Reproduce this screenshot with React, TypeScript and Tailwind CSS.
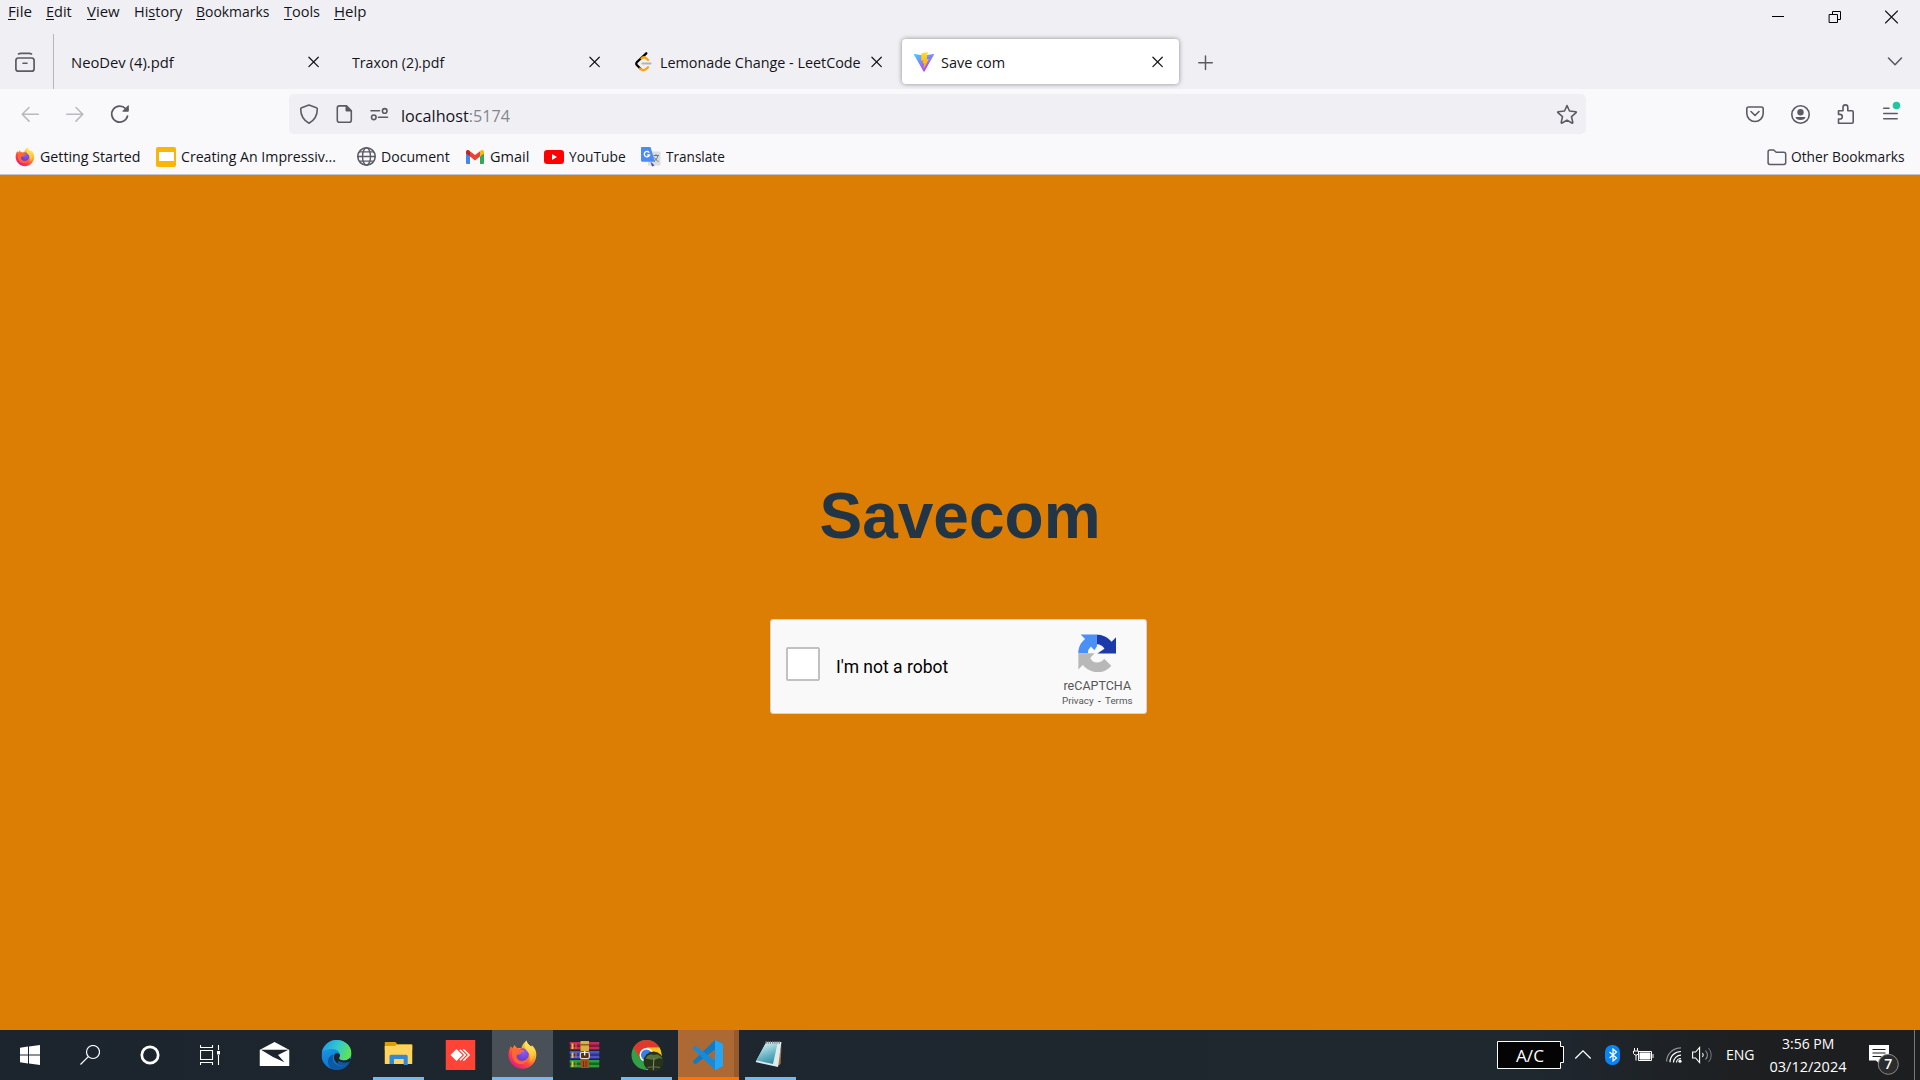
import { useLayoutEffect, useRef, useState } from "react";
import type { ReactNode } from "react";

/** Single line of text condensed or widened to a given advance width. */
function Fit({ w, className = "", children }: { w: number; className?: string; children: ReactNode }) {
  const ref = useRef<HTMLSpanElement>(null);
  const [scale, setScale] = useState(1);
  useLayoutEffect(() => {
    if (ref.current) setScale(w / ref.current.offsetWidth);
  }, [w]);
  return (
    <span className={"block shrink-0 whitespace-nowrap " + className} style={{ width: w }}>
      <span ref={ref} className="inline-block origin-left" style={{ transform: `scaleX(${scale})` }}>
        {children}
      </span>
    </span>
  );
}

function Ico({ box, className = "", children }: { box: [number, number, number, number]; className?: string; children: ReactNode }) {
  return (
    <svg
      viewBox={box.join(" ")}
      width={box[2]}
      height={box[3]}
      className={"block shrink-0 " + className}
      fill="none"
      stroke="#5b5b66"
      strokeWidth={1.6}
      strokeLinecap="round"
      strokeLinejoin="round"
    >
      {children}
    </svg>
  );
}

const Close = ({ className = "" }: { className?: string }) => (
  <Ico box={[0, 0, 12, 12]} className={className}>
    <path d="M.9 1.200 10.300 10.600M10.300 1.200.9 10.600" stroke="#15141a" strokeWidth={1.25} />
  </Ico>
);

function Firefox({ size, id }: { size: number; id: string }) {
  return (
    <svg viewBox="0 0 30 30" width={size} height={size} className="block shrink-0">
      <defs>
        <linearGradient id={id + "a"} x1="0.85" y1="0.1" x2="0.2" y2="0.95">
          <stop offset="0" stopColor="#fff44f" />
          <stop offset="0.35" stopColor="#ffa22b" />
          <stop offset="0.65" stopColor="#ff4a3c" />
          <stop offset="1" stopColor="#e31587" />
        </linearGradient>
        <radialGradient id={id + "b"} cx="0.6" cy="0.3" r="0.8">
          <stop offset="0" stopColor="#9059ff" />
          <stop offset="1" stopColor="#5b3cc4" />
        </radialGradient>
        <linearGradient id={id + "c"} x1="0" y1="0" x2="0" y2="1">
          <stop offset="0" stopColor="#fff36b" />
          <stop offset="1" stopColor="#ffb52a" />
        </linearGradient>
      </defs>
      <path
        d="M3.2 6.2c.9.9 1.4 1.7 1.8 2.4C5.600 7 6.500 5.500 7.500 5c0 1.600 1 2.600 2.500 3h4C14.200 5 16.500 3 19 .5c.5 3 2.500 4.500 4.500 6 .6-.3.900-.8 1-1.200C28 8.500 29 12 28.800 15.500 28.400 23 22.500 28.800 15 28.800S1.400 23 1 15.500C.9 12 1.700 9 3.200 6.200z"
        fill={`url(#${id}a)`}
      />
      <circle cx="15" cy="14.500" r="6.300" fill={`url(#${id}b)`} />
      <path d="M5 8.600C8 7.500 11 8 13.500 9.500c1.500.3 2.800.4 3.200 1.200-.5 1.500-3.200 1.500-3.700 3.300-1.400.6-3.200.5-4 1.500-.8 3.500 2.500 6.300 6 5.800 3-.4 5-2 6-4.600-1 6-6 8.300-10 7C6 22.500 3 17 5 8.600z" fill="#ff6a33" opacity="0.9" />
      <path d="M19 .5c.5 3 2.500 4.500 4.500 6C26 9 26.800 12 26 16c-.6 3-2 5-4 6.300 1.500-3 1.300-6.300-.5-9C19.500 10.500 15 9 19 .5z" fill={`url(#${id}c)`} opacity="0.9" />
    </svg>
  );
}

const MENU: [string, string, string, number, string][] = [
  ["", "F", "ile", 24, "ml-[8px]"],
  ["", "E", "dit", 26, "ml-[14px]"],
  ["", "V", "iew", 33, "ml-[15px]"],
  ["Hi", "s", "tory", 48, "ml-[14px]"],
  ["", "B", "ookmarks", 73, "ml-[14px]"],
  ["", "T", "ools", 36, "ml-[15px]"],
  ["", "H", "elp", 32, "ml-[14px]"],
];

function MenuBar() {
  return (
    <div className="flex h-[34px] items-start text-[14.5px] leading-[23px]">
      {MENU.map(([pre, u, post, w, cls]) => (
        <Fit key={u} w={w} className={cls}>
          {pre}
          <span className="underline decoration-1 underline-offset-2">{u}</span>
          {post}
        </Fit>
      ))}
      <Ico box={[1770, 9, 16, 16]} className="mt-[9px] ml-auto">
        <path d="M1772 16.500h12" stroke="#000" strokeWidth={1} strokeLinecap="butt" />
      </Ico>
      <Ico box={[1827, 9, 16, 16]} className="mt-[9px] ml-[41px]">
        <path d="M1829.500 14.500h8v8h-8zM1832.500 14v-2.500h8v8H1838" stroke="#000" strokeWidth={1} strokeLinejoin="miter" />
      </Ico>
      <Ico box={[1883, 9, 16, 16]} className="mt-[9px] mr-[21px] ml-[40px]">
        <path d="M1885.500 11l12 12M1897.500 11l-12 12" stroke="#15141a" strokeWidth={1.1} />
      </Ico>
    </div>
  );
}

function TabBar() {
  return (
    <div className="flex h-[55px] items-center text-[14.5px] leading-[22px]">
      <Ico box={[14, 51, 22, 22]} className="ml-[14px]">
        <rect x="15.900" y="58" width="18.200" height="13.200" rx="2.500" strokeWidth={1.7} />
        <path d="M18.500 54c.7-.4 1.200-.6 2-.6h9c.8 0 1.300.2 2 .6M23 63.200h4" strokeWidth={1.6} />
      </Ico>
      <div className="ml-[17px] h-full w-px bg-[#b6b6bd]" />
      <div className="ml-[3px] flex w-[281px] items-center pl-[14px]">
        <Fit w={103} className="mt-[2px]">NeoDev (4).pdf</Fit>
        <Close className="ml-[134px]" />
      </div>
      <div className="flex w-[281px] items-center pl-[14px]">
        <Fit w={92} className="mt-[2px]">Traxon (2).pdf</Fit>
        <Close className="ml-[145px]" />
      </div>
      <div className="flex w-[281px] items-center pl-[15px]">
        <Ico box={[634, 51, 20, 22]}>
          <path d="M646.300 53.300 637 62c-1 1-1 2.300 0 3.300l3.500 3.500" stroke="#000" strokeWidth={2.300} />
          <path d="M641.500 58.500c1.500-1.700 3.500-1.700 5 0l1.500 1.500M640 68.500c2 2.300 4.500 2.300 6.500.3l1.500-1.500" stroke="#ffa116" strokeWidth={2.300} />
          <path d="M642.500 63.500h8" stroke="#b3b3b3" strokeWidth={2.200} />
        </Ico>
        <Fit w={201} className="mt-[2px] ml-[6px]">Lemonade Change - LeetCode</Fit>
        <Close className="ml-[10px]" />
      </div>
      <div className="ml-[2px] flex h-[45px] w-[277px] items-center rounded-[4px] bg-white pl-[11px] shadow-[0_0_5px_rgba(0,0,0,0.42)]">
        <svg viewBox="0 0 22 22" width="22" height="22" className="block shrink-0">
          <defs>
            <linearGradient id="va" x1="0" y1="0" x2="0.6" y2="1">
              <stop offset="0" stopColor="#41d1ff" />
              <stop offset="1" stopColor="#bd34fe" />
            </linearGradient>
            <linearGradient id="vb" x1="0" y1="0" x2="0" y2="1">
              <stop offset="0" stopColor="#ffdd35" />
              <stop offset="1" stopColor="#ffa800" />
            </linearGradient>
          </defs>
          <path d="M1.500 3 11 4.500 20.500 3c.4 0 .6.400.4.800L11.500 20.500c-.2.400-.7.400-.9 0L1 3.800c-.2-.4 0-.8.5-.8z" fill="url(#va)" />
          <path d="M14.800 1 8.500 2.200 8 9.700l2.200-.4-.6 3.300 1.600-.4-.8 5 .5.200 5-9.500-2.300.3z" fill="url(#vb)" />
        </svg>
        <Fit w={64} className="mt-[2px] ml-[6px]">Save com</Fit>
        <Close className="ml-[147px]" />
      </div>
      <Ico box={[1197, 54, 17, 17]} className="mt-[2px] ml-[18px]">
        <path d="M1205.500 56v13.500M1198.800 62.700h13.500" strokeWidth={1.5} />
      </Ico>
      <Ico box={[1885, 53, 20, 18]} className="mr-[15px] ml-auto">
        <path d="m1888.500 58 6.500 6.700 6.500-6.700" />
      </Ico>
    </div>
  );
}

function NavBar() {
  return (
    <div className="flex h-[50px] items-center">
      <Ico box={[20, 104, 20, 20]} className="ml-[20px]">
        <path d="M38.300 114.300H22.500M29 107.500l-6.800 6.800 6.800 6.800" stroke="#b9b9bf" />
      </Ico>
      <Ico box={[65, 104, 20, 20]} className="ml-[25px]">
        <path d="M66.800 114.300h15.800M76 107.500l6.800 6.800-6.800 6.800" stroke="#b9b9bf" />
      </Ico>
      <Ico box={[110, 104, 20, 20]} className="ml-[25px]">
        <path d="M127.500 116a8 8 0 1 1-1.800-7.200" strokeWidth={1.700} />
        <path d="M128.300 106v5.200h-5.200z" fill="#5b5b66" strokeWidth={1} />
      </Ico>
      <div className="ml-[159px] flex h-[40px] w-[1297px] items-center rounded-[5px] bg-[#f0f0f4] pl-[10px]">
        <Ico box={[299, 103, 20, 22]}>
          <path d="m309 105 7.400 2.700c.6.200.9.700.9 1.300 0 5.500-2.300 11-8.300 14.200-6-3.200-8.300-8.700-8.300-14.200 0-.6.300-1.100.9-1.300z" />
        </Ico>
        <Ico box={[334, 103, 20, 22]} className="ml-[15px]">
          <path d="M339.300 105.900h7.200l4.800 4.800v9.500c0 1.200-.9 2-2 2h-10c-1.100 0-2-.8-2-2v-12.300c0-1.200.9-2 2-2z" />
          <path d="M346 106v5h5.300z" fill="#5b5b66" strokeWidth={1} />
        </Ico>
        <Ico box={[369, 103, 20, 22]} className="ml-[15px]">
          <path d="M371 110.700h8.500M378.500 117.200h9" />
          <circle cx="384.700" cy="110.900" r="2.300" />
          <circle cx="373.800" cy="117.300" r="2.300" />
        </Ico>
        <Fit w={109} className="mt-[3px] ml-[12px] text-[16.800px] leading-[24px] text-[#15141a]">
          localhost<span className="text-[#85858c]">:5174</span>
        </Fit>
        <Ico box={[1556, 103, 22, 22]} className="mr-[8px] ml-auto">
          <path d="m1567 105.500 2.500 5.500 6.200.700c.6.100.8.600.4 1l-4.600 4 1.300 5.700c.1.600-.4.900-.9.600l-4.900-2.900-4.900 2.900c-.5.300-1 0-.9-.6l1.300-5.700-4.600-4c-.4-.4-.2-.9.400-1l6.200-.7z" />
        </Ico>
      </div>
      <Ico box={[1745, 103, 20, 22]} className="ml-auto">
        <path d="M1748.500 107h13c1 0 1.700.7 1.700 1.700v4.600a8.200 8.200 0 0 1-16.400 0v-4.600c0-1 .7-1.700 1.700-1.700z" />
        <path d="m1751 111.500 4 4 4-4" />
      </Ico>
      <Ico box={[1790, 104, 21, 21]} className="mt-px ml-[25px]">
        <circle cx="1800.500" cy="114.500" r="8.700" />
        <circle cx="1800.500" cy="112.200" r="3.200" fill="#5b5b66" stroke="none" />
        <path d="M1795.500 117h10c0 2-2.500 3-5 3s-5-1-5-3z" fill="#5b5b66" stroke="none" />
      </Ico>
      <Ico box={[1836, 103, 20, 22]} className="ml-[25px]">
        <path d="M1838.500 123.200v-4.200h1.500a2.300 2.300 0 0 0 0-4.600h-1.500v-3.600h4.500v-3.500a2.400 2.400 0 0 1 4.800 0v3.500h4.200c.7 0 1.200.5 1.200 1.200v10c0 .7-.5 1.200-1.200 1.200z" />
      </Ico>
      <Ico box={[1881, 101, 21, 24]} className="mr-[18px] mb-[2px] ml-[25px]">
        <path d="M1883.700 108.300h5.300M1883.700 113.500h13.500M1883.700 118.700h13.500" strokeWidth={1.5} />
        <circle cx="1896.500" cy="105.500" r="3.800" fill="#2ac3a2" stroke="none" />
      </Ico>
    </div>
  );
}

function Bookmarks() {
  return (
    <div className="flex h-[36px] items-center border-b border-[#c3c3c9] text-[14.500px] leading-[22px]">
      <div className="ml-[15px]">
        <Firefox size={20} id="fb" />
      </div>
      <Fit w={101} className="mt-px ml-[5px]">Getting Started</Fit>
      <div className="ml-[15px] flex h-[20px] w-[20px] items-center justify-center rounded-[2px] bg-[#f9b606]">
        <div className="h-[9px] w-[15px] bg-white" />
      </div>
      <Fit w={155} className="mt-px ml-[5px]">Creating An Impressiv...</Fit>
      <Ico box={[356, 147, 21, 21]} className="ml-[20px]">
        <circle cx="366.500" cy="157.500" r="8.700" />
        <ellipse cx="366.500" cy="157.500" rx="4" ry="8.700" strokeWidth={1.400} />
        <path d="M358 157.500h17M359.500 152.800h14M359.500 162.200h14" strokeWidth={1.300} />
      </Ico>
      <Fit w={69} className="mt-px ml-[4px]">Document</Fit>
      <svg viewBox="0 0 18 14" width="18" height="14" className="ml-[16px] block shrink-0">
        <path d="M0 2v10.700c0 .7.500 1.300 1.300 1.300H4V6.300z" fill="#4285f4" />
        <path d="M18 2v10.700c0 .7-.5 1.300-1.300 1.300H14V6.300z" fill="#34a853" />
        <path d="M14 1.200v5.300l4-3V2c0-1.900-2-2.600-3.200-1.500z" fill="#fbbc04" />
        <path d="M4 6.500V1.200l5 3.900 5-3.900v5.300l-5 3.900z" fill="#ea4335" />
        <path d="M0 2v1.500l4 3V1.200l-.8-.7C2 -.6 0 .1 0 2z" fill="#c5221f" />
      </svg>
      <Fit w={39} className="mt-px ml-[6px]">Gmail</Fit>
      <svg viewBox="0 0 20 14" width="20" height="14" className="ml-[15px] block shrink-0">
        <rect width="20" height="14" rx="3.200" fill="#f00" />
        <path d="M8 4v6l5-3z" fill="#fff" />
      </svg>
      <Fit w={57} className="mt-px ml-[5px]">YouTube</Fit>
      <svg viewBox="0 0 20 20" width="20" height="20" className="ml-[15px] block shrink-0">
        <rect x="7" y="4.500" width="12.500" height="14" rx="1" fill="#dcdcdc" />
        <path d="m9.500 14.500 4 4-2.500 1z" fill="#3a4fb0" />
        <path d="M1.200 0h8.300L14 14.800H1.200C.5 14.800 0 14.300 0 13.600V1.200C0 .5.5 0 1.200 0z" fill="#4c8bf5" />
        <path d="M8.300 5.700A2.700 2.700 0 1 0 8.600 8H6.300" fill="none" stroke="#fff" strokeWidth="1.300" />
        <path d="M12.500 8.500h5.500M15 7.200v1.300M17 8.500c-.6 2.500-2 4.500-4 6M13.500 10.500c1 2 2.300 3.200 4 4" fill="none" stroke="#607d8b" strokeWidth="1" />
      </svg>
      <Fit w={59} className="mt-px ml-[5px]">Translate</Fit>
      <Ico box={[1766, 146, 22, 20]} className="ml-auto">
        <path d="M1770 149h3.700l2.500 2.300h7.600c1.100 0 1.900.8 1.900 1.900v8.300c0 1.100-.8 1.900-1.900 1.900H1770c-1.100 0-1.900-.8-1.900-1.900v-10.600c0-1.100.8-1.900 1.900-1.900z" strokeWidth={1.500} />
      </Ico>
      <Fit w={114} className="mt-px mr-[15px] ml-[3px]">Other Bookmarks</Fit>
    </div>
  );
}

function Captcha() {
  return (
    <div className="flex h-[95px] w-[377px] rounded-[3px] border border-[#d3d3d3] bg-[#f9f9f9] font-[Roboto,sans-serif]">
      <div className="mt-[27px] ml-[15px] h-[34px] w-[34px] shrink-0 rounded-[2px] border-2 border-[#c1c1c1] bg-white" />
      <Fit w={112} className="mt-[36px] ml-[16px] text-[17.500px] leading-[22px] text-black">I'm not a robot</Fit>
      <div className="mr-[13px] ml-auto flex w-[71px] flex-col items-center">
        <svg viewBox="0 0 64 64" width="38" height="38" className="mt-[14px] mr-px block">
          <path d="M64 31.955a33.300 33.300 0 0 0-.014-.457V4.604l-7.436 7.436C50.464 4.591 41.208-.16 30.841-.16h1.100v16.500a15.100 15.100 0 0 1 12.600 7.400l-12 8.200z" fill="#1c3aa9" transform="translate(0 1)" />
          <path d="M31.940 1a32.400 32.400 0 0 0-.46.014H4.450l7.430 7.430C4.400 14.560.500 22.800.500 32.500h16.200a15.100 15.100 0 0 1 5-11.300l6 6.300 4.240-7z" fill="#4a90f6" />
          <path d="M.6 32.500v27.300l7.400-7.400c6.100 7.500 15.300 12 25.500 12 9 0 17.500-3.800 22.500-10.800L44 41.500a15.100 15.100 0 0 1-12 6.500c-5.500 0-9.500-3-11.500-7.500l7.500-8z" fill="#b8b8b8" />
        </svg>
        <Fit w={68} className="mt-[6px] text-[12.500px] leading-[16px] text-[#555]">reCAPTCHA</Fit>
        <Fit w={71} className="mt-px text-[9.500px] leading-[12px] text-[#555]">
          Privacy <span className="px-[2px] text-black">-</span> Terms
        </Fit>
      </div>
    </div>
  );
}

function TaskItem({ children, state = "idle" }: { children: ReactNode; state?: "idle" | "open" | "active" | "alert" }) {
  return (
    <div className="flex h-[50px] w-[62px] shrink-0 pl-px">
      <div
        className={
          "grid h-full w-[61px] grid-rows-[47px_3px] justify-items-center " +
          (state === "active" ? "bg-[#4a5058]" : state === "alert" ? "border-r-[5px] border-[#995a2b] bg-[#ac6933]" : "")
        }
      >
        <div className={"flex h-[50px] items-center justify-center " + (state === "alert" ? "translate-x-[2px]" : "-translate-x-[0.500px]")}>{children}</div>
        {state === "open" && <div className="z-10 h-[3px] w-[51px] bg-[#76b9ed]" />}
        {state === "active" && <div className="z-10 h-[3px] w-[61px] bg-[#76b9ed]" />}
        {state === "alert" && <div className="z-10 -mr-[5px] h-[3px] w-[61px] justify-self-start bg-[#ff7300]" />}
      </div>
    </div>
  );
}

function Books() {
  const bands = [
    ["#c02c5c", "#8a1640", 1],
    ["#4f54c8", "#30328c", 10],
    ["#25a03c", "#0f6a20", 19],
  ] as const;
  return (
    <svg viewBox="0 0 30 28" width="30" height="28" className="block">
      {bands.map(([a, b, y]) => (
        <g key={y}>
          <rect x="0" y={y} width="30" height="8" rx="1" fill={b} />
          <rect x="0" y={y} width="30" height="2.500" fill={a} />
          <rect x="1" y={y + 5} width="29" height="2" fill={a} />
          <rect x="2" y={y + 1.500} width="2" height="5.500" fill="#e8c33b" />
          <rect x="6" y={y + 1.500} width="1" height="5.500" fill="#d9762b" />
        </g>
      ))}
      <rect x="11" y="0" width="8.500" height="10" fill="#d8b040" />
      <rect x="11" y="3" width="8.500" height="1.500" fill="#8a6418" />
      <rect x="11" y="10" width="8.500" height="17" fill="#a8501c" />
      <path d="M14 20v6M16.500 20v6" stroke="#6b2e0a" />
      <rect x="10.800" y="11.500" width="9" height="6" rx="1.500" fill="#5b3010" stroke="#e0e0e0" strokeWidth="1.200" />
      <path d="M15.200 10v4.500" stroke="#fff" strokeWidth="1.300" />
    </svg>
  );
}

function Taskbar() {
  return (
    <div className="flex h-[50px] bg-linear-to-r from-[#1c252d] from-0% via-[#1f272f] via-80% to-[#1d1e1f] to-92% text-white">
      <div className="flex w-[60px] items-center justify-center">
        <svg viewBox="0 0 20 20" width="20" height="20" fill="#fff">
          <path d="M0 2.800 8 1.600v7.900H0zM9 1.400 20 0v9.500H9zM0 10.500h8v7.900l-8-1.200zM9 10.500h11V20L9 18.600z" />
        </svg>
      </div>
      <div className="flex w-[60px] items-center justify-center">
        <svg viewBox="0 0 20 20" width="20" height="20" fill="none" stroke="#fff" strokeWidth="1.200">
          <circle cx="13" cy="7" r="6.500" />
          <path d="M8.300 11.700.5 19.500" />
        </svg>
      </div>
      <div className="flex w-[60px] items-center justify-center">
        <svg viewBox="0 0 20 20" width="20" height="20" fill="none" stroke="#fff" strokeWidth="2.700">
          <circle cx="10" cy="10" r="8.200" />
        </svg>
      </div>
      <div className="flex w-[60px] items-center justify-center">
        <svg viewBox="0 0 20 20" width="20" height="20" fill="none" stroke="#fff" strokeWidth="1.100">
          <path d="M.5 5.500h12v9H.5zM.5 0v2.500h12V0M.5 20v-2.500h12V20M18.500 0v5M18.500 10v10" />
          <path d="M17 6h3v3.500h-3z" fill="#fff" stroke="none" />
        </svg>
      </div>
      <div className="ml-[3px] flex">
        <TaskItem>
          <svg viewBox="0 0 30 24" width="30" height="24" className="mb-[2px] block">
            <path d="M0 8 15 0l15 8v16H0z" fill="#fff" />
            <path d="M1.500 7.800h27.500L18.500 13l6.500 7.300L13.500 15z" fill="#1c252d" />
          </svg>
        </TaskItem>
        <TaskItem>
          <svg viewBox="0 0 30 30" width="30" height="30" className="block">
            <defs>
              <linearGradient id="ea" x1="0" y1="0.300" x2="1" y2="0.600">
                <stop offset="0" stopColor="#1e9de6" />
                <stop offset="0.500" stopColor="#36c8ca" />
                <stop offset="1" stopColor="#62e64b" />
              </linearGradient>
              <linearGradient id="eb" x1="0" y1="0" x2="0.300" y2="1">
                <stop offset="0" stopColor="#1ba5e8" />
                <stop offset="1" stopColor="#0f6fd0" />
              </linearGradient>
            </defs>
            <circle cx="15" cy="15" r="15" fill="url(#eb)" />
            <path d="M.6 11.500C3 4 9 0 15 0c9 0 15 6.500 15 13 0 4.500-3.500 7.500-7.500 7.500-3 0-5-1.200-5-2.300 0-.8 1-1.200 1-3.200 0-3-3-6-8-6-4 0-7.500 1-9.900 2.500z" fill="url(#ea)" />
            <path d="M12 14.500C9.500 21 14 26 20 26c3 0 5.500-1 7.700-3C25 27.500 20.500 30 15.500 30 9 30 6 25 6.500 20.500 7 17 9 15 12 14.500z" fill="#0c59a4" />
            <path d="M18.500 15c0 2-1 2.400-1 3.200 0 1.100 2 2.300 5 2.300 2 0 4-.8 5.500-2.200l2 1.200L27 23.700c-3 1.500-7 1.800-10 .3-4-2-5.500-6-4-9.500 1-1.700 4.500-2 5.500.5z" fill="#1c252d" />
            <path d="M17 20.500c3 2.500 8 2.500 11.200 1.300L27 24c-2.700 2-8 2-11 0z" fill="#0f55a3" />
          </svg>
        </TaskItem>
        <TaskItem state="open">
          <svg viewBox="0 0 28 24" width="28" height="24" className="mb-[2px] block">
            <path d="M0 1c0-.6.400-1 1-1h9.500c.5 0 .8.200 1 .5L13 2.500h14c.6 0 1 .4 1 1V8H0z" fill="#dd9f05" />
            <path d="M0 4h10.500l2-1.500H27c.6 0 1 .4 1 1V21c0 .6-.4 1-1 1H1c-.6 0-1-.4-1-1z" fill="#ffd35c" />
            <path d="M5 22v-7.500c0-1 .6-1.700 1.600-1.700h15c1 0 1.600.7 1.600 1.700V23h-4v-6H9.500v5z" fill="#2f8ad8" />
          </svg>
        </TaskItem>
        <TaskItem>
          <svg viewBox="0 0 30 30" width="30" height="30" className="block">
            <path d="M0 0h30v30H0z" fill="#ff4337" />
            <path d="m5 15 6-6 6 6-6 6z" fill="#fff" />
            <path d="m14.500 9.800 5.200 5.200-5.200 5.200M17.800 9.300l5.700 5.700-5.700 5.700" fill="none" stroke="#fff" strokeWidth="1.500" />
          </svg>
        </TaskItem>
        <TaskItem state="active">
          <Firefox size={30} id="ft" />
        </TaskItem>
        <TaskItem>
          <Books />
        </TaskItem>
        <TaskItem state="open">
          <svg viewBox="0 0 34 34" width="34" height="34" className="mt-[2px] ml-[2px] block">
            <circle cx="16" cy="16" r="15" fill="#34a046" />
            <path d="M3 8.500A15 15 0 0 1 29 8.500H16L9.500 19.500z" fill="#e0392c" />
            <path d="M29 8.500A15 15 0 0 1 16 31l6.500-11.500L16 8.500z" fill="#fcc31e" />
            <circle cx="16" cy="16" r="7" fill="#fff" />
            <circle cx="16" cy="16" r="5.500" fill="#3a7de8" />
            <circle cx="23" cy="22.500" r="10" fill="#27331a" />
            <path d="M15 20c2-4.500 5-5 8-4 4-1.500 7 0 9 4-2-1-4-1-5.500 0-1.500 1-3 .5-4 .500-2 1-5-1.500-7.500-.5z" fill="#56733a" />
            <path d="M23.500 19c-.5 5-.5 8-.7 12" stroke="#8c8a66" strokeWidth="1.100" />
            <path d="M17 28.500c4-.8 9-.8 12.500 0" stroke="#6d7050" strokeWidth="1" fill="none" />
          </svg>
        </TaskItem>
        <TaskItem state="alert">
          <svg viewBox="0 0 30 30" width="30" height="30" className="block">
            <path d="m22 0 7 3.200c.7.300 1 .8 1 1.500L22.500 9 3.200 23.800c-.5.400-1 .4-1.500 0L.4 22.500c-.5-.5-.5-1.200 0-1.700z" fill="#0f7ac6" />
            <path d="m22 30 7-3.200c.7-.3 1-.8 1-1.500L22.500 21 3.200 6.200c-.5-.4-1-.4-1.500 0L.4 7.500c-.5.500-.5 1.200 0 1.700z" fill="#168bdb" />
            <path d="M22 0v30l7-3.200c.7-.3 1-.8 1-1.500V4.700c0-.7-.3-1.200-1-1.500z" fill="#27a5f2" />
          </svg>
        </TaskItem>
        <TaskItem state="open">
          <svg viewBox="0 0 30 28" width="30" height="28" className="mb-[3px] block">
            <defs>
              <linearGradient id="np" x1="0.200" y1="0" x2="0.600" y2="1">
                <stop offset="0" stopColor="#d8f1f5" />
                <stop offset="0.600" stopColor="#67b5c4" />
                <stop offset="1" stopColor="#3a8fa5" />
              </linearGradient>
            </defs>
            <path d="M26 5 25 24l-4 3z" fill="#a4774a" />
            <path d="M11 2h15l-3.500 25L0 22z" fill="#dfeaea" />
            <path d="M10 3.500h12L17.500 24 1 20.500z" fill="url(#np)" />
            <path d="M10 2.500h15" stroke="#7c8688" strokeWidth="2.500" strokeDasharray="1.200 1" />
          </svg>
        </TaskItem>
      </div>
      <div className="ml-auto flex items-center font-['Open_Sans',sans-serif]">
        <svg viewBox="0 0 68 30" width="68" height="30" className="block">
          <path d="M.5 1.500h63v5h3v16h-3v6H.5z" fill="#040404" stroke="#fff" />
          <text x="19" y="21.500" fontSize="15.500" fill="#fff" textLength="28" lengthAdjust="spacingAndGlyphs">A/C</text>
        </svg>
        <svg viewBox="0 0 18 12" width="18" height="12" className="ml-[9px]" fill="none" stroke="#fff" strokeWidth="1.300">
          <path d="M1.300 9.500 9 1.800l7.700 7.700" />
        </svg>
        <div className="ml-[13px] flex h-[20px] w-[15px] items-center justify-center rounded-[7px] bg-[#0a84ee]">
          <svg viewBox="0 0 10 14" width="10" height="14" fill="none" stroke="#fff" strokeWidth="1.200">
            <path d="m1.500 4 7 6L5 13V1l3.500 3-7 6" />
          </svg>
        </div>
        <svg viewBox="0 0 21 14" width="21" height="14" className="ml-[13px]" fill="none" stroke="#fff">
          <path d="M5.500 3.500h13v9h-13z" />
          <path d="M7 5h10v6H7z" fill="#fff" />
          <path d="M20 6v4M1.500 0v3M4.500 0v3" />
          <path d="M.5 3h5v2.500L4 7H2L.5 5.500zM3 7v5.500" />
        </svg>
        <svg viewBox="0 0 16 16" width="16" height="16" className="ml-[12px]" fill="none" strokeWidth="1.200">
          <path d="M.6 14.500C.6 7 7 .8 15 .8" stroke="#8b8f93" />
          <path d="M4 15.200C4 9 9 4.500 15 4.500M7.500 15.500c0-4 3.500-7.300 7.500-7.300M10.500 15.500c0-2.300 2-4 4.500-4" stroke="#fff" />
          <circle cx="14" cy="14.200" r="1.600" fill="#fff" />
        </svg>
        <svg viewBox="0 0 22 18" width="22" height="18" className="ml-[10px]" fill="none" stroke="#fff" strokeWidth="1.100">
          <path d="M.6 6h3l4-4.500v15l-4-4.500h-3z" />
          <path d="M10.500 7c1 1.300 1 2.700 0 4" />
          <path d="M13.500 4.500c2.300 2.700 2.300 6.300 0 9" stroke="#8b8f93" />
          <path d="M16.500 2c3.700 4 3.700 10 0 14" stroke="#6c7074" />
        </svg>
        <Fit w={29} className="ml-[12px] text-[14.500px] leading-[20px]">ENG</Fit>
        <div className="ml-[15px] flex w-[78px] flex-col items-center text-[14.500px] leading-[23px]">
          <Fit w={52} className="mr-[2px]">3:56 PM</Fit>
          <Fit w={77} className="mr-[2px]">03/12/2024</Fit>
        </div>
        <svg viewBox="1868 1040 32 36" width="32" height="36" className="mt-[6px] ml-[20px] block">
          <path d="M1869 1045h20v15.500h-9v4l-4-4h-7z" fill="#fff" />
          <path d="M1872.500 1049.500h13M1872.500 1053h13M1872.500 1056.500h9" stroke="#1d1e1f" strokeWidth="1.200" />
          <circle cx="1888.300" cy="1064.300" r="10" fill="#2c2c2c" stroke="#8a8a8a" />
          <text x="1888.300" y="1069" fontSize="14" fontWeight="600" fill="#fff" textAnchor="middle">7</text>
        </svg>
        <div className="mr-[5px] ml-[14px] h-[50px] w-px bg-[#77787a]" />
      </div>
    </div>
  );
}

export default function App() {
  return (
    <div className="flex h-[1080px] w-[1920px] flex-col overflow-hidden bg-[#f9f9fb] font-['Open_Sans','Noto_Sans',sans-serif] text-[#15141a]">
      <header>
        <div className="bg-[#f0f0f4]">
          <MenuBar />
          <TabBar />
        </div>
        <NavBar />
        <Bookmarks />
      </header>
      <main className="flex flex-1 flex-col items-center bg-[#dc7d04] pt-[306px]">
        <h1 className="font-['Liberation_Sans',sans-serif] text-[64px] leading-[70px] font-bold text-[#213547]">Savecom</h1>
        <div className="mt-[68px] mr-[3px]">
          <Captcha />
        </div>
      </main>
      <Taskbar />
    </div>
  );
}
